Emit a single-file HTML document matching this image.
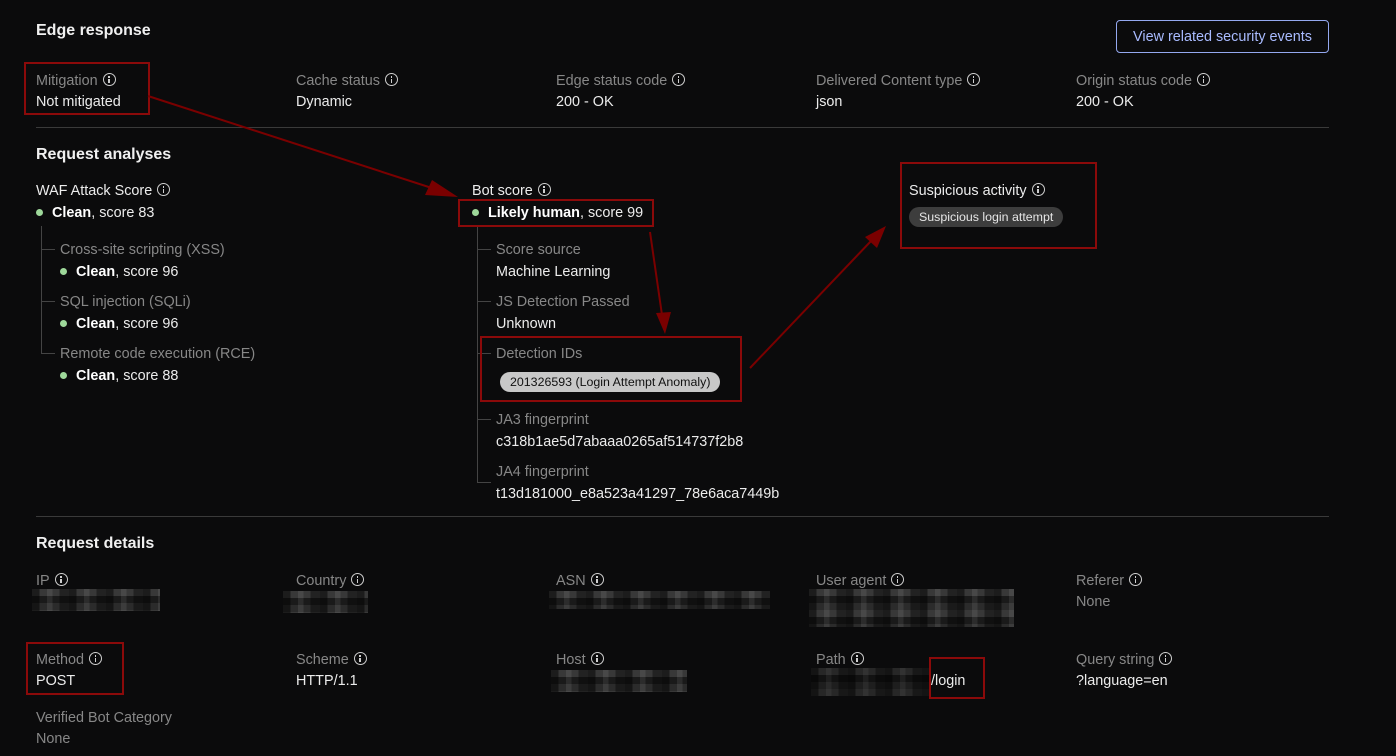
<!DOCTYPE html>
<html><head><meta charset="utf-8"><style>
*{margin:0;padding:0;box-sizing:border-box}
body{width:1396px;height:756px;background:#0b0b0c;position:relative;overflow:hidden;font-family:"Liberation Sans",sans-serif;font-size:14.4px;color:#ececec}
.a{position:absolute;white-space:nowrap;line-height:18px;transform:translateY(1px)}
.l{color:#878787}
.h{font-size:16px;font-weight:bold;color:#f0f0f0;line-height:20px;transform:none}
.i{display:inline-block;width:13px;height:13px;border:1.2px solid #cfcfcf;border-radius:50%;vertical-align:-1px;margin-left:5px;position:relative}
.i:before{content:"";position:absolute;left:4.6px;top:2.2px;width:1.4px;height:1.5px;background:#cfcfcf}
.i:after{content:"";position:absolute;left:4.6px;top:4.8px;width:1.4px;height:4.5px;background:#cfcfcf}
.d{display:inline-block;width:7px;height:7px;border-radius:50%;background:#9ed89a;margin-right:9px;vertical-align:1px}
b{font-weight:bold;color:#fff}
.hr{position:absolute;left:36px;width:1293px;height:1px;background:#3a3a3a}
.v{position:absolute;width:1px;background:#444}
.hz{position:absolute;height:1px;width:14px;background:#444}
.rb{position:absolute;border:2px solid #8b0a0a}
.px{position:absolute;background:
linear-gradient(90deg,rgba(0,0,0,.5) 0 20%,transparent 20% 40%,rgba(255,255,255,.08) 40% 55%,transparent 55% 75%,rgba(0,0,0,.4) 75%) 0 0/37px 7px,
linear-gradient(0deg,#2b2b2b 0 33%,#1a1a1a 33% 66%,#383838 66%) 0 0/11px 21px}
.pill{position:absolute;border-radius:11px;font-size:12.4px;line-height:20px;padding:0 10px;white-space:nowrap}
</style></head><body>
<div class="a h" style="left:36px;top:21px">Edge response</div>
<div class="a" style="left:1116px;top:20px;width:213px;height:33px;border:1px solid #94a8f0;border-radius:4px;color:#a9bbff;text-align:center;line-height:31px;transform:none;padding-top:1px">View related security events</div>

<div class="a l" style="left:36px;top:71px">Mitigation<span class="i"></span></div>
<div class="a" style="left:36px;top:92px">Not mitigated</div>
<div class="a l" style="left:296px;top:71px">Cache status<span class="i"></span></div>
<div class="a" style="left:296px;top:92px">Dynamic</div>
<div class="a l" style="left:556px;top:71px">Edge status code<span class="i"></span></div>
<div class="a" style="left:556px;top:92px">200 - OK</div>
<div class="a l" style="left:816px;top:71px">Delivered Content type<span class="i"></span></div>
<div class="a" style="left:816px;top:92px">json</div>
<div class="a l" style="left:1076px;top:71px">Origin status code<span class="i"></span></div>
<div class="a" style="left:1076px;top:92px">200 - OK</div>
<div class="hr" style="top:127px"></div>

<div class="a h" style="left:36px;top:145px">Request analyses</div>
<div class="a" style="left:36px;top:181px">WAF Attack Score<span class="i"></span></div>
<div class="a" style="left:36px;top:203px"><span class="d"></span><b>Clean</b>, score 83</div>
<div class="v" style="left:41px;top:226px;height:127px"></div>
<div class="hz" style="left:41px;top:249px"></div>
<div class="hz" style="left:41px;top:301px"></div>
<div class="hz" style="left:41px;top:353px"></div>
<div class="a l" style="left:60px;top:240px">Cross-site scripting (XSS)</div>
<div class="a" style="left:60px;top:262px"><span class="d"></span><b>Clean</b>, score 96</div>
<div class="a l" style="left:60px;top:292px">SQL injection (SQLi)</div>
<div class="a" style="left:60px;top:314px"><span class="d"></span><b>Clean</b>, score 96</div>
<div class="a l" style="left:60px;top:344px">Remote code execution (RCE)</div>
<div class="a" style="left:60px;top:366px"><span class="d"></span><b>Clean</b>, score 88</div>

<div class="a" style="left:472px;top:181px">Bot score<span class="i"></span></div>
<div class="a" style="left:472px;top:203px"><span class="d"></span><b>Likely human</b>, score 99</div>
<div class="v" style="left:477px;top:226px;height:257px"></div>
<div class="hz" style="left:477px;top:249px"></div>
<div class="hz" style="left:477px;top:301px"></div>
<div class="hz" style="left:477px;top:353px"></div>
<div class="hz" style="left:477px;top:419px"></div>
<div class="hz" style="left:477px;top:482px"></div>
<div class="a l" style="left:496px;top:240px">Score source</div>
<div class="a" style="left:496px;top:262px">Machine Learning</div>
<div class="a l" style="left:496px;top:292px">JS Detection Passed</div>
<div class="a" style="left:496px;top:314px">Unknown</div>
<div class="a l" style="left:496px;top:344px">Detection IDs</div>
<div class="pill" style="left:500px;top:372px;background:#c8c8c8;color:#111">201326593 (Login Attempt Anomaly)</div>
<div class="a l" style="left:496px;top:410px">JA3 fingerprint</div>
<div class="a" style="left:496px;top:432px">c318b1ae5d7abaaa0265af514737f2b8</div>
<div class="a l" style="left:496px;top:462px">JA4 fingerprint</div>
<div class="a" style="left:496px;top:484px">t13d181000_e8a523a41297_78e6aca7449b</div>

<div class="a" style="left:909px;top:181px">Suspicious activity<span class="i"></span></div>
<div class="pill" style="left:909px;top:207px;background:#3d3d3d;color:#e6e6e6">Suspicious login attempt</div>

<div class="hr" style="top:516px"></div>
<div class="a h" style="left:36px;top:534px">Request details</div>
<div class="a l" style="left:36px;top:571px">IP<span class="i"></span></div>
<div class="px" style="left:32px;top:589px;width:128px;height:22px"></div>
<div class="a l" style="left:296px;top:571px">Country<span class="i"></span></div>
<div class="px" style="left:283px;top:591px;width:85px;height:22px"></div>
<div class="a l" style="left:556px;top:571px">ASN<span class="i"></span></div>
<div class="px" style="left:549px;top:591px;width:221px;height:18px"></div>
<div class="a l" style="left:816px;top:571px">User agent<span class="i"></span></div>
<div class="px" style="left:809px;top:589px;width:205px;height:38px"></div>
<div class="a l" style="left:1076px;top:571px">Referer<span class="i"></span></div>
<div class="a l" style="left:1076px;top:592px">None</div>

<div class="a l" style="left:36px;top:650px">Method<span class="i"></span></div>
<div class="a" style="left:36px;top:671px">POST</div>
<div class="a l" style="left:296px;top:650px">Scheme<span class="i"></span></div>
<div class="a" style="left:296px;top:671px">HTTP/1.1</div>
<div class="a l" style="left:556px;top:650px">Host<span class="i"></span></div>
<div class="px" style="left:551px;top:670px;width:136px;height:22px"></div>
<div class="a l" style="left:816px;top:650px">Path<span class="i"></span></div>
<div class="px" style="left:811px;top:668px;width:120px;height:28px;filter:brightness(.7)"></div>
<div class="a" style="left:931px;top:671px">/login</div>
<div class="a l" style="left:1076px;top:650px">Query string<span class="i"></span></div>
<div class="a" style="left:1076px;top:671px">?language=en</div>
<div class="a l" style="left:36px;top:708px">Verified Bot Category</div>
<div class="a l" style="left:36px;top:729px">None</div>

<div class="rb" style="left:24px;top:62px;width:126px;height:53px"></div>
<div class="rb" style="left:458px;top:199px;width:196px;height:28px"></div>
<div class="rb" style="left:480px;top:336px;width:262px;height:66px"></div>
<div class="rb" style="left:900px;top:162px;width:197px;height:87px"></div>
<div class="rb" style="left:26px;top:642px;width:98px;height:53px"></div>
<div class="rb" style="left:929px;top:657px;width:56px;height:42px"></div>

<svg width="1396" height="756" style="position:absolute;left:0;top:0" fill="#7a0000" stroke="#7a0000">
<line x1="148" y1="96" x2="438" y2="190" stroke-width="2"/>
<polygon points="458,197 425,195 432,180" stroke="none"/>
<line x1="650" y1="232" x2="662" y2="315" stroke-width="2"/>
<polygon points="665,334 656,313 671,312" stroke="none"/>
<line x1="750" y1="368" x2="872" y2="240" stroke-width="2"/>
<polygon points="886,226 877,248 865,237" stroke="none"/>
</svg>
</body></html>
